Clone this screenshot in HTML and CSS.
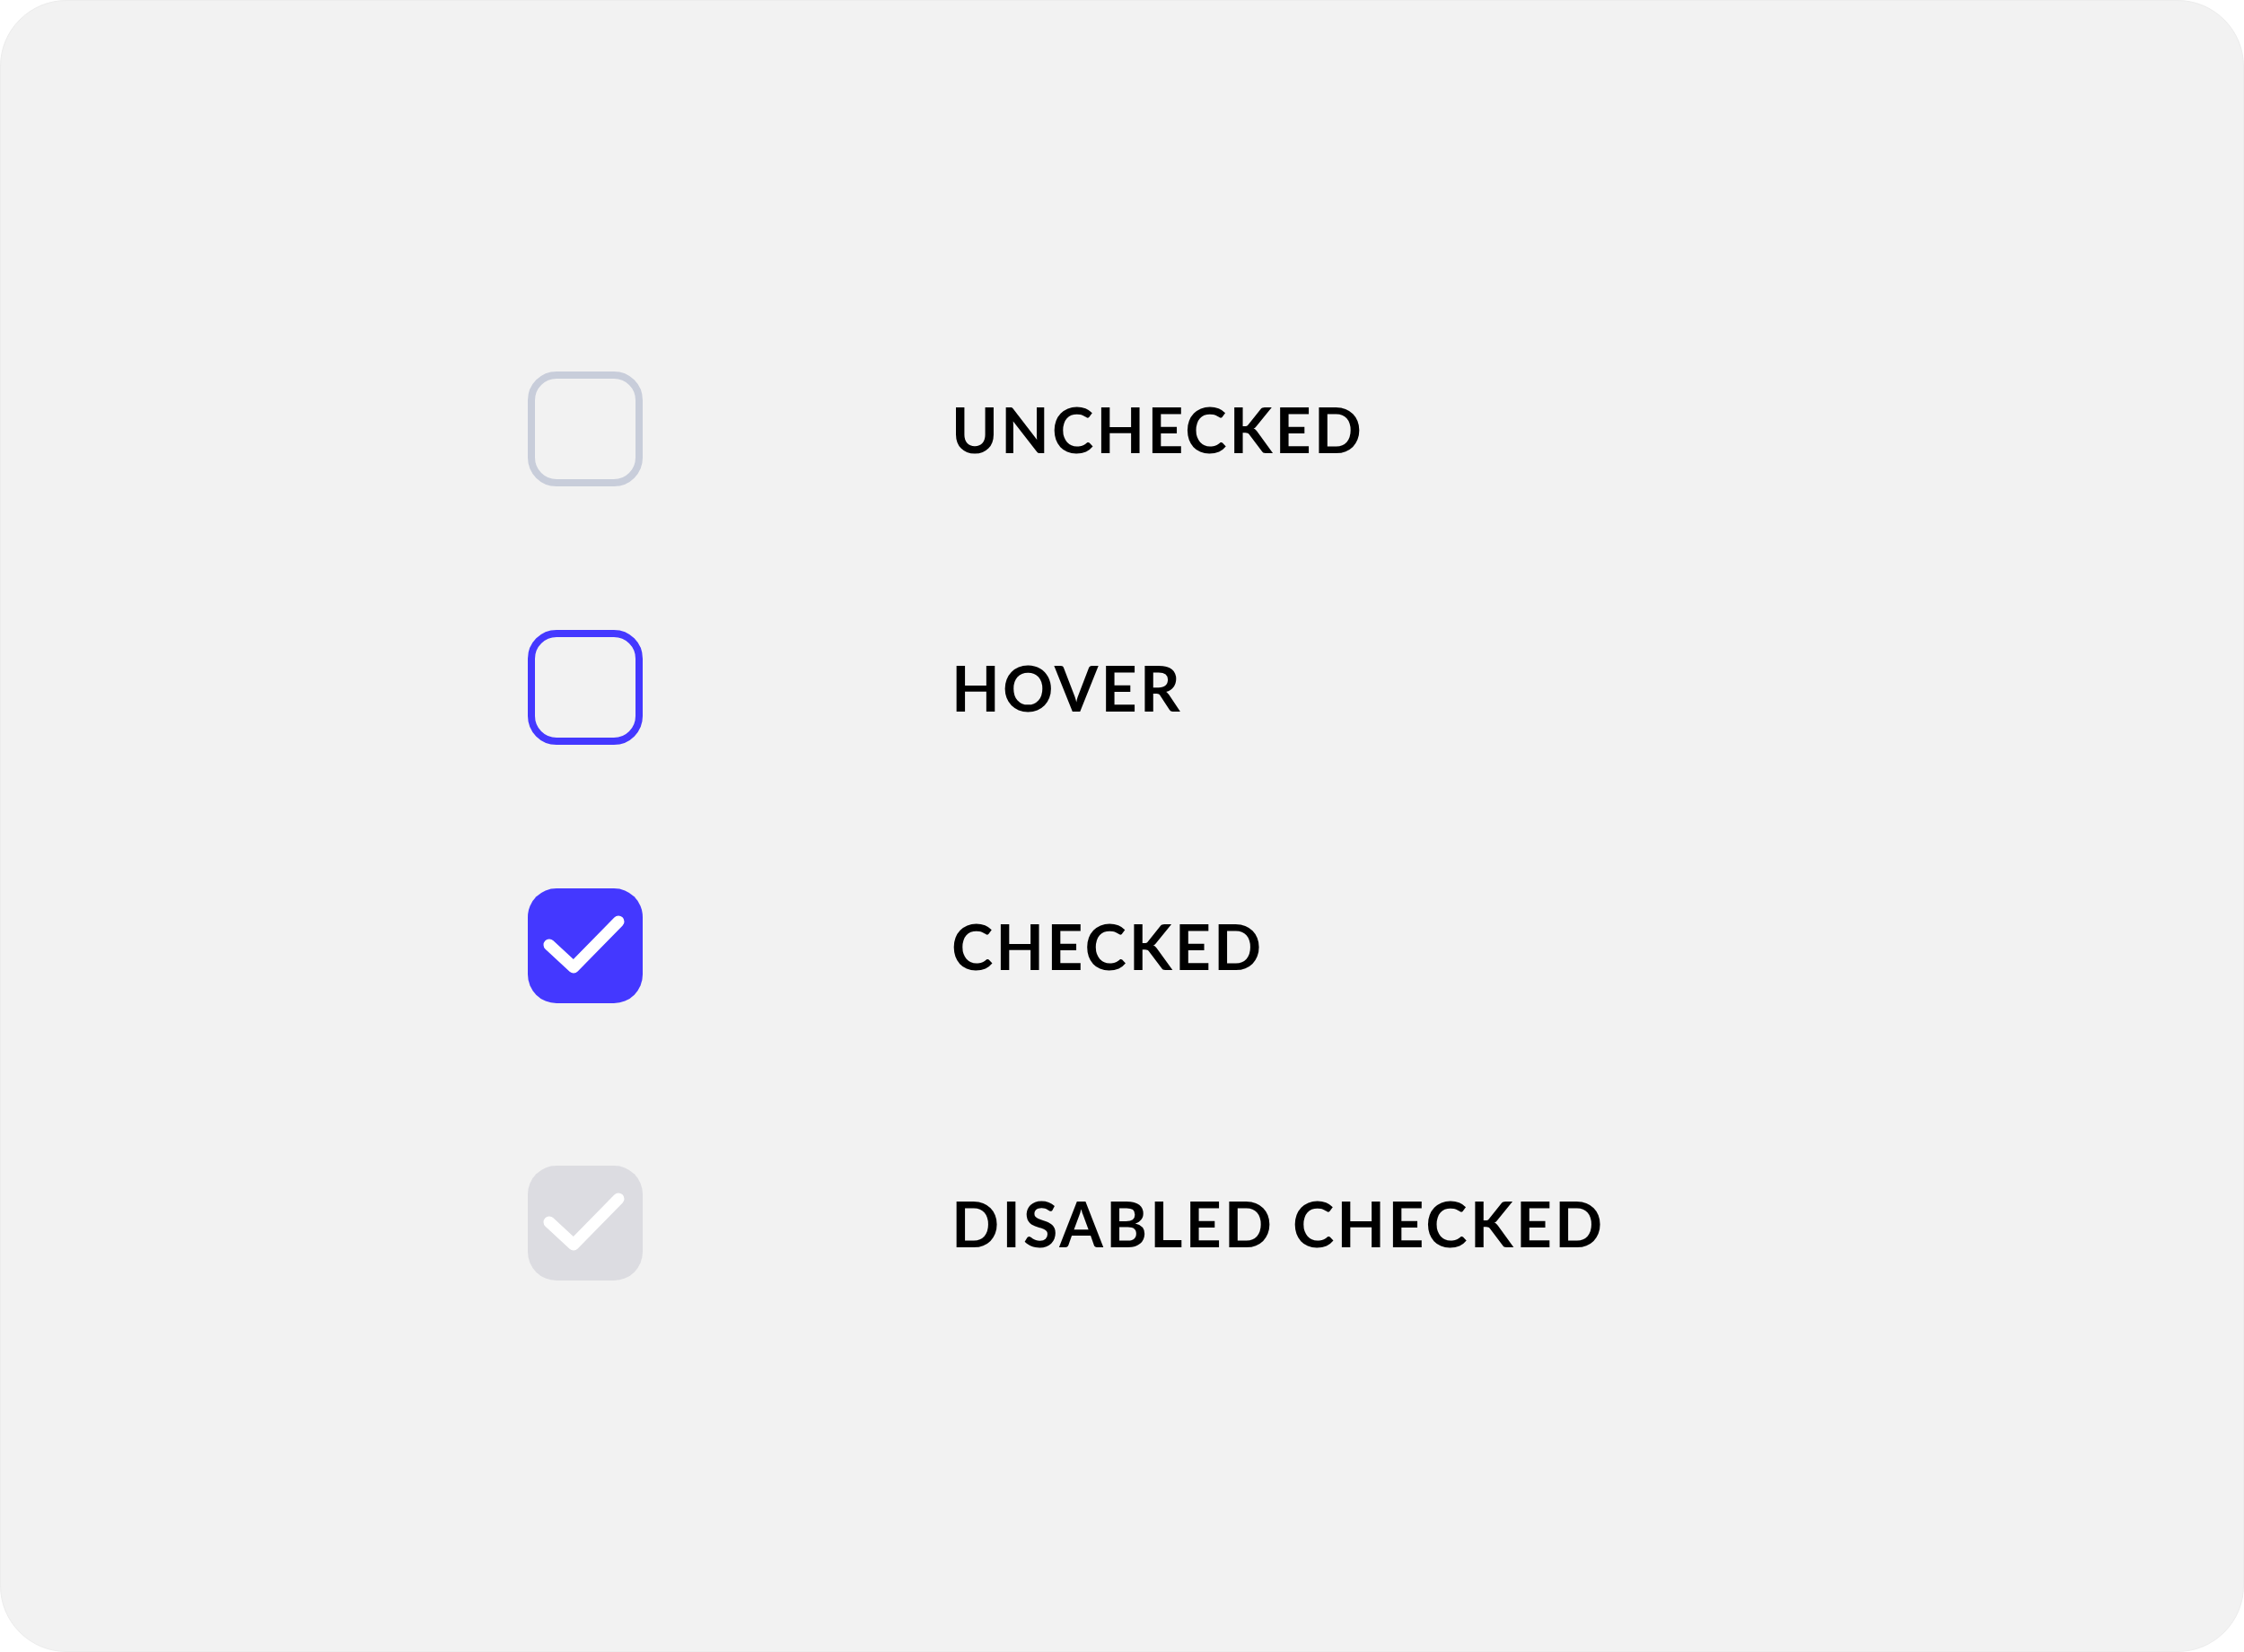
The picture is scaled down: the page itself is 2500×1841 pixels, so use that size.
FILE: index.html
```html
<!DOCTYPE html>
<html lang="en">
<head>
<meta charset="utf-8">
<title>Checkbox states</title>
<link rel="stylesheet" href="styles.css">
</head>
<body>
<main class="card">
  <ul class="states">
    <li class="state">
      <span class="box box-unchecked"></span>
      <span class="label">UNCHECKED</span>
    </li>
    <li class="state">
      <span class="box box-hover"></span>
      <span class="label">HOVER</span>
    </li>
    <li class="state">
      <span class="box box-checked">
        <svg class="check" viewBox="0 0 128 128" width="128" height="128" aria-hidden="true"><path d="M24 63 L51 88 L101 37" /></svg>
      </span>
      <span class="label">CHECKED</span>
    </li>
    <li class="state state-last">
      <span class="box box-disabled">
        <svg class="check" viewBox="0 0 128 128" width="128" height="128" aria-hidden="true"><path d="M24 63 L51 88 L101 37" /></svg>
      </span>
      <span class="label">DISABLED CHECKED</span>
    </li>
  </ul>
</main>
</body>
</html>
```

FILE: styles.css
```css
html, body {
  margin: 0;
  padding: 0;
  background: #ffffff;
}

.card {
  box-sizing: border-box;
  width: 2500px;
  height: 1841px;
  background: #f2f2f2;
  border-radius: 74px;
  border: 1px solid #ececec;
  padding: 413px 0 0 587px;
}

.states {
  list-style: none;
  margin: 0;
  padding: 0;
  display: flex;
  flex-direction: column;
  gap: 160px;
}

.state {
  display: flex;
  align-items: center;
  height: 128px;
}

.state-last {
  margin-top: 21px;
}

.box {
  box-sizing: border-box;
  flex: none;
  width: 128px;
  height: 128px;
  border-radius: 32px;
  position: relative;
  display: block;
}

.box-unchecked {
  border: 8px solid #c8cdda;
}

.box-hover {
  border: 8px solid #4438ff;
}

.box-checked {
  background: #4438ff;
}

.box-disabled {
  background: #dcdce1;
}

.check {
  display: block;
  fill: none;
  stroke: #ffffff;
  stroke-width: 13;
  stroke-linecap: round;
  stroke-linejoin: round;
}

.label {
  margin-left: 344px;
  font-family: "Lato", "Noto Sans", sans-serif;
  font-weight: 700;
  font-size: 70px;
  line-height: 1;
  letter-spacing: 3px;
  color: #000000;
}
```
